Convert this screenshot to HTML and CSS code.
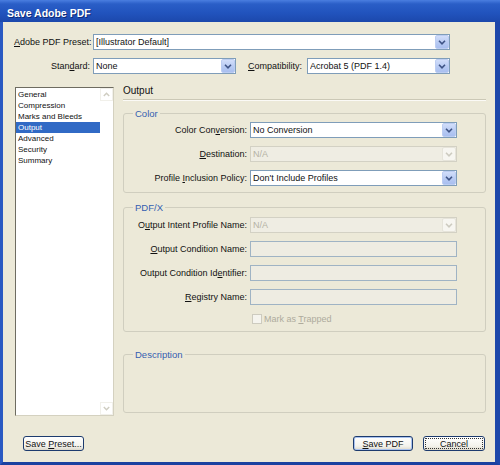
FILE: index.html
```html
<!DOCTYPE html>
<html>
<head>
  <title>Save Adobe PDF</title>
  <link rel="stylesheet" href="styles.css">
</head>
<body>
  <div class="window">
    <div class="titlebar">Save Adobe PDF</div>
    <div class="dialog">

      <div class="top-row">
        <span class="top-label"><u>A</u>dobe PDF Preset:</span>
        <div class="select wide">
          <span class="value">[Illustrator Default]</span>
          <span class="drop"><svg width="8" height="5" viewBox="0 0 8 5"><path d="M1 0.8 L4 3.8 L7 0.8" fill="none" stroke="#3f5486" stroke-width="1.6"/></svg></span>
        </div>
      </div>
      <div class="top-row">
        <span class="top-label right">Stan<u>d</u>ard:</span>
        <div class="select half">
          <span class="value">None</span>
          <span class="drop"><svg width="8" height="5" viewBox="0 0 8 5"><path d="M1 0.8 L4 3.8 L7 0.8" fill="none" stroke="#3f5486" stroke-width="1.6"/></svg></span>
        </div>
        <span class="compat-label"><u>C</u>ompatibility:</span>
        <div class="select half">
          <span class="value">Acrobat 5 (PDF 1.4)</span>
          <span class="drop"><svg width="8" height="5" viewBox="0 0 8 5"><path d="M1 0.8 L4 3.8 L7 0.8" fill="none" stroke="#3f5486" stroke-width="1.6"/></svg></span>
        </div>
      </div>

      <div class="main">
        <div class="list">
          <div class="items">
            <div class="item">General</div>
            <div class="item">Compression</div>
            <div class="item">Marks and Bleeds</div>
            <div class="item selected">Output</div>
            <div class="item">Advanced</div>
            <div class="item">Security</div>
            <div class="item">Summary</div>
          </div>
          <div class="scrollbar">
            <span class="sb-btn"><svg width="7" height="5" viewBox="0 0 7 5"><path d="M0.8 4 L3.5 1.2 L6.2 4" fill="none" stroke="#cfcdc1" stroke-width="1.4"/></svg></span>
            <span class="sb-btn"><svg width="7" height="5" viewBox="0 0 7 5"><path d="M0.8 1 L3.5 3.8 L6.2 1" fill="none" stroke="#cfcdc1" stroke-width="1.4"/></svg></span>
          </div>
        </div>

        <div class="panel">
          <div class="panel-title">Output</div>

          <fieldset class="group color">
            <legend>Color</legend>
            <div class="field-row">
              <span class="field-label">Color Con<u>v</u>ersion:</span>
              <div class="select field">
                <span class="value">No Conversion</span>
                <span class="drop"><svg width="8" height="5" viewBox="0 0 8 5"><path d="M1 0.8 L4 3.8 L7 0.8" fill="none" stroke="#3f5486" stroke-width="1.6"/></svg></span>
              </div>
            </div>
            <div class="field-row">
              <span class="field-label"><u>D</u>estination:</span>
              <div class="select field disabled">
                <span class="value">N/A</span>
                <span class="drop"><svg width="8" height="5" viewBox="0 0 8 5"><path d="M1 0.8 L4 3.8 L7 0.8" fill="none" stroke="#cdcbc0" stroke-width="1.6"/></svg></span>
              </div>
            </div>
            <div class="field-row">
              <span class="field-label">Profile <u>I</u>nclusion Policy:</span>
              <div class="select field">
                <span class="value">Don't Include Profiles</span>
                <span class="drop"><svg width="8" height="5" viewBox="0 0 8 5"><path d="M1 0.8 L4 3.8 L7 0.8" fill="none" stroke="#3f5486" stroke-width="1.6"/></svg></span>
              </div>
            </div>
          </fieldset>

          <fieldset class="group pdfx">
            <legend>PDF/X</legend>
            <div class="field-row">
              <span class="field-label">O<u>u</u>tput Intent Profile Name:</span>
              <div class="select field disabled">
                <span class="value">N/A</span>
                <span class="drop"><svg width="8" height="5" viewBox="0 0 8 5"><path d="M1 0.8 L4 3.8 L7 0.8" fill="none" stroke="#cdcbc0" stroke-width="1.6"/></svg></span>
              </div>
            </div>
            <div class="field-row">
              <span class="field-label"><u>O</u>utput Condition Name:</span>
              <div class="textbox"></div>
            </div>
            <div class="field-row">
              <span class="field-label">Output Condition Id<u>e</u>ntifier:</span>
              <div class="textbox"></div>
            </div>
            <div class="field-row">
              <span class="field-label"><u>R</u>egistry Name:</span>
              <div class="textbox"></div>
            </div>
            <div class="check-row">
              <span class="checkbox"></span>
              <span class="check-label">Mark as <u>T</u>rapped</span>
            </div>
          </fieldset>

          <fieldset class="group description">
            <legend>Description</legend>
          </fieldset>
        </div>
      </div>

      <div class="buttons">
        <button class="btn preset">Save <u>P</u>reset...</button>
        <span class="spacer"></span>
        <button class="btn default"><u>S</u>ave PDF</button>
        <button class="btn focused">Cancel</button>
      </div>

    </div>
  </div>
</body>
</html>
```

FILE: styles.css
```css
* {
  box-sizing: border-box;
}
body {
  margin: 0;
  font-family: "Liberation Sans", Arial, sans-serif;
  font-size: 9px;
  color: #111;
}
u {
  text-decoration-thickness: 1px;
  text-underline-offset: 1px;
}
.window {
  width: 500px;
  height: 465px;
  display: flex;
  flex-direction: column;
  background: #1f4cb2;
}
.titlebar {
  height: 22px;
  flex: none;
  display: flex;
  align-items: center;
  padding: 3px 0 0 7px;
  font-size: 10.5px;
  font-weight: bold;
  color: #fff;
  text-shadow: 1px 1px 0 #0d2a78;
  background: linear-gradient(#4a7ee0 0%, #2a5ec7 18%, #2153bd 60%, #1c48ac 100%);
}
.dialog {
  flex: 1;
  display: flex;
  flex-direction: column;
  background: #ece9d8;
  border-left: 3px solid #2a59c2;
  border-right: 5px solid #1d47aa;
  border-bottom: 3px solid #1a41a0;
  padding: 12px 9px 11px 11px;
}

/* top preset rows */
.top-row {
  display: flex;
  align-items: center;
  height: 16px;
  margin-bottom: 8px;
}
.top-row:nth-child(2) {
  margin-bottom: 0;
}
.top-label {
  width: 76px;
  margin-right: 3px;
  white-space: nowrap;
}
.top-label.right {
  text-align: right;
}
.compat-label {
  width: 59px;
  margin-left: 12px;
  white-space: nowrap;
}

/* combo boxes */
.select {
  display: flex;
  align-items: center;
  height: 16px;
  border: 1px solid #7f9db9;
  background: #fff;
  padding-left: 2px;
}
.select.wide {
  width: 357px;
}
.select.half {
  width: 143px;
}
.select.field {
  width: 207px;
}
.select .value {
  flex: 1;
  white-space: nowrap;
  overflow: hidden;
}
.drop {
  width: 14px;
  height: 14px;
  display: flex;
  align-items: center;
  justify-content: center;
  border: 1px solid #bccdf2;
  border-radius: 2px;
  background: linear-gradient(#d2defa, #b6c9f2 60%, #a9bff0);
}
.select.disabled {
  border-color: #d3d1c4;
  background: #efede3;
}
.select.disabled .value {
  color: #b5b2a4;
}
.select.disabled .drop {
  border-color: #e6e4da;
  background: #f7f6f1;
}

/* main area */
.main {
  flex: none;
  height: 329px;
  margin-top: 13px;
  display: flex;
  gap: 9px;
}
.list {
  width: 99px;
  margin-left: 1px;
  display: flex;
  background: #fff;
  border: 1px solid;
  border-color: #6e6c61 #d4d1c0 #d4d1c0 #6e6c61;
}
.items {
  flex: 1;
  padding-top: 1px;
}
.item {
  height: 11px;
  line-height: 11px;
  font-size: 8px;
  padding-left: 2px;
  white-space: nowrap;
}
.item.selected {
  background: #316ac5;
  color: #fff;
}
.scrollbar {
  width: 13px;
  display: flex;
  flex-direction: column;
  justify-content: space-between;
}
.sb-btn {
  height: 13px;
  display: flex;
  align-items: center;
  justify-content: center;
  border: 1px solid #f1f0ea;
}

.panel {
  flex: 1;
  display: flex;
  flex-direction: column;
}
.panel-title {
  margin-top: -2px;
  font-size: 10px;
  line-height: 12px;
  padding-bottom: 2px;
  border-bottom: 1px solid #cbc8b6;
  box-shadow: 0 1px 0 #fbfaf6;
}

/* group boxes */
.group {
  margin: 8px 0 0;
  min-width: 0;
  border: 1px solid #d0cebf;
  border-radius: 3px;
  padding: 3px 28px 6px 12px;
}
.group legend {
  padding: 0 2px;
  margin-left: -3px;
  line-height: 11px;
  font-size: 9.5px;
  color: #3560b0;
}
.group.pdfx {
  margin-top: 9px;
  padding-top: 4px;
  padding-bottom: 7px;
}
.group.description {
  flex: 1;
  margin-top: 17px;
  margin-bottom: 3px;
}
.field-row {
  display: flex;
  align-items: center;
  height: 16px;
  margin-bottom: 8px;
}
.color .field-row:last-child {
  margin-bottom: 0;
}
.field-label {
  width: 111px;
  margin-right: 3px;
  text-align: right;
  white-space: nowrap;
}
.textbox {
  width: 207px;
  height: 16px;
  border: 1px solid #9fb3c4;
  background: #eeece2;
}
.check-row {
  display: flex;
  align-items: center;
  height: 11px;
  padding-left: 116px;
}
.checkbox {
  width: 10px;
  height: 10px;
  border: 1px solid #cdcbbf;
  background: #f5f4ee;
  margin-right: 2px;
}
.check-label {
  color: #aeab9d;
}

/* bottom buttons */
.buttons {
  flex: none;
  height: 15px;
  margin-top: 20px;
  display: flex;
}
.spacer {
  flex: 1;
}
.btn {
  height: 15px;
  padding: 0;
  font-family: "Liberation Sans", Arial, sans-serif;
  font-size: 9px;
  color: #111;
  border: 1px solid #1d3b6e;
  border-radius: 3px;
  background: linear-gradient(#ffffff, #f3f2ec 70%, #dcd8cb);
}
.btn.preset {
  width: 61px;
  margin-left: 9px;
}
.btn.default {
  width: 60px;
  box-shadow: inset 0 0 0 1px #a9c2ee;
}
.btn.focused {
  width: 62px;
  margin-left: 10px;
  margin-right: 1px;
  outline: 1px dotted #333;
  outline-offset: -3px;
}
```
